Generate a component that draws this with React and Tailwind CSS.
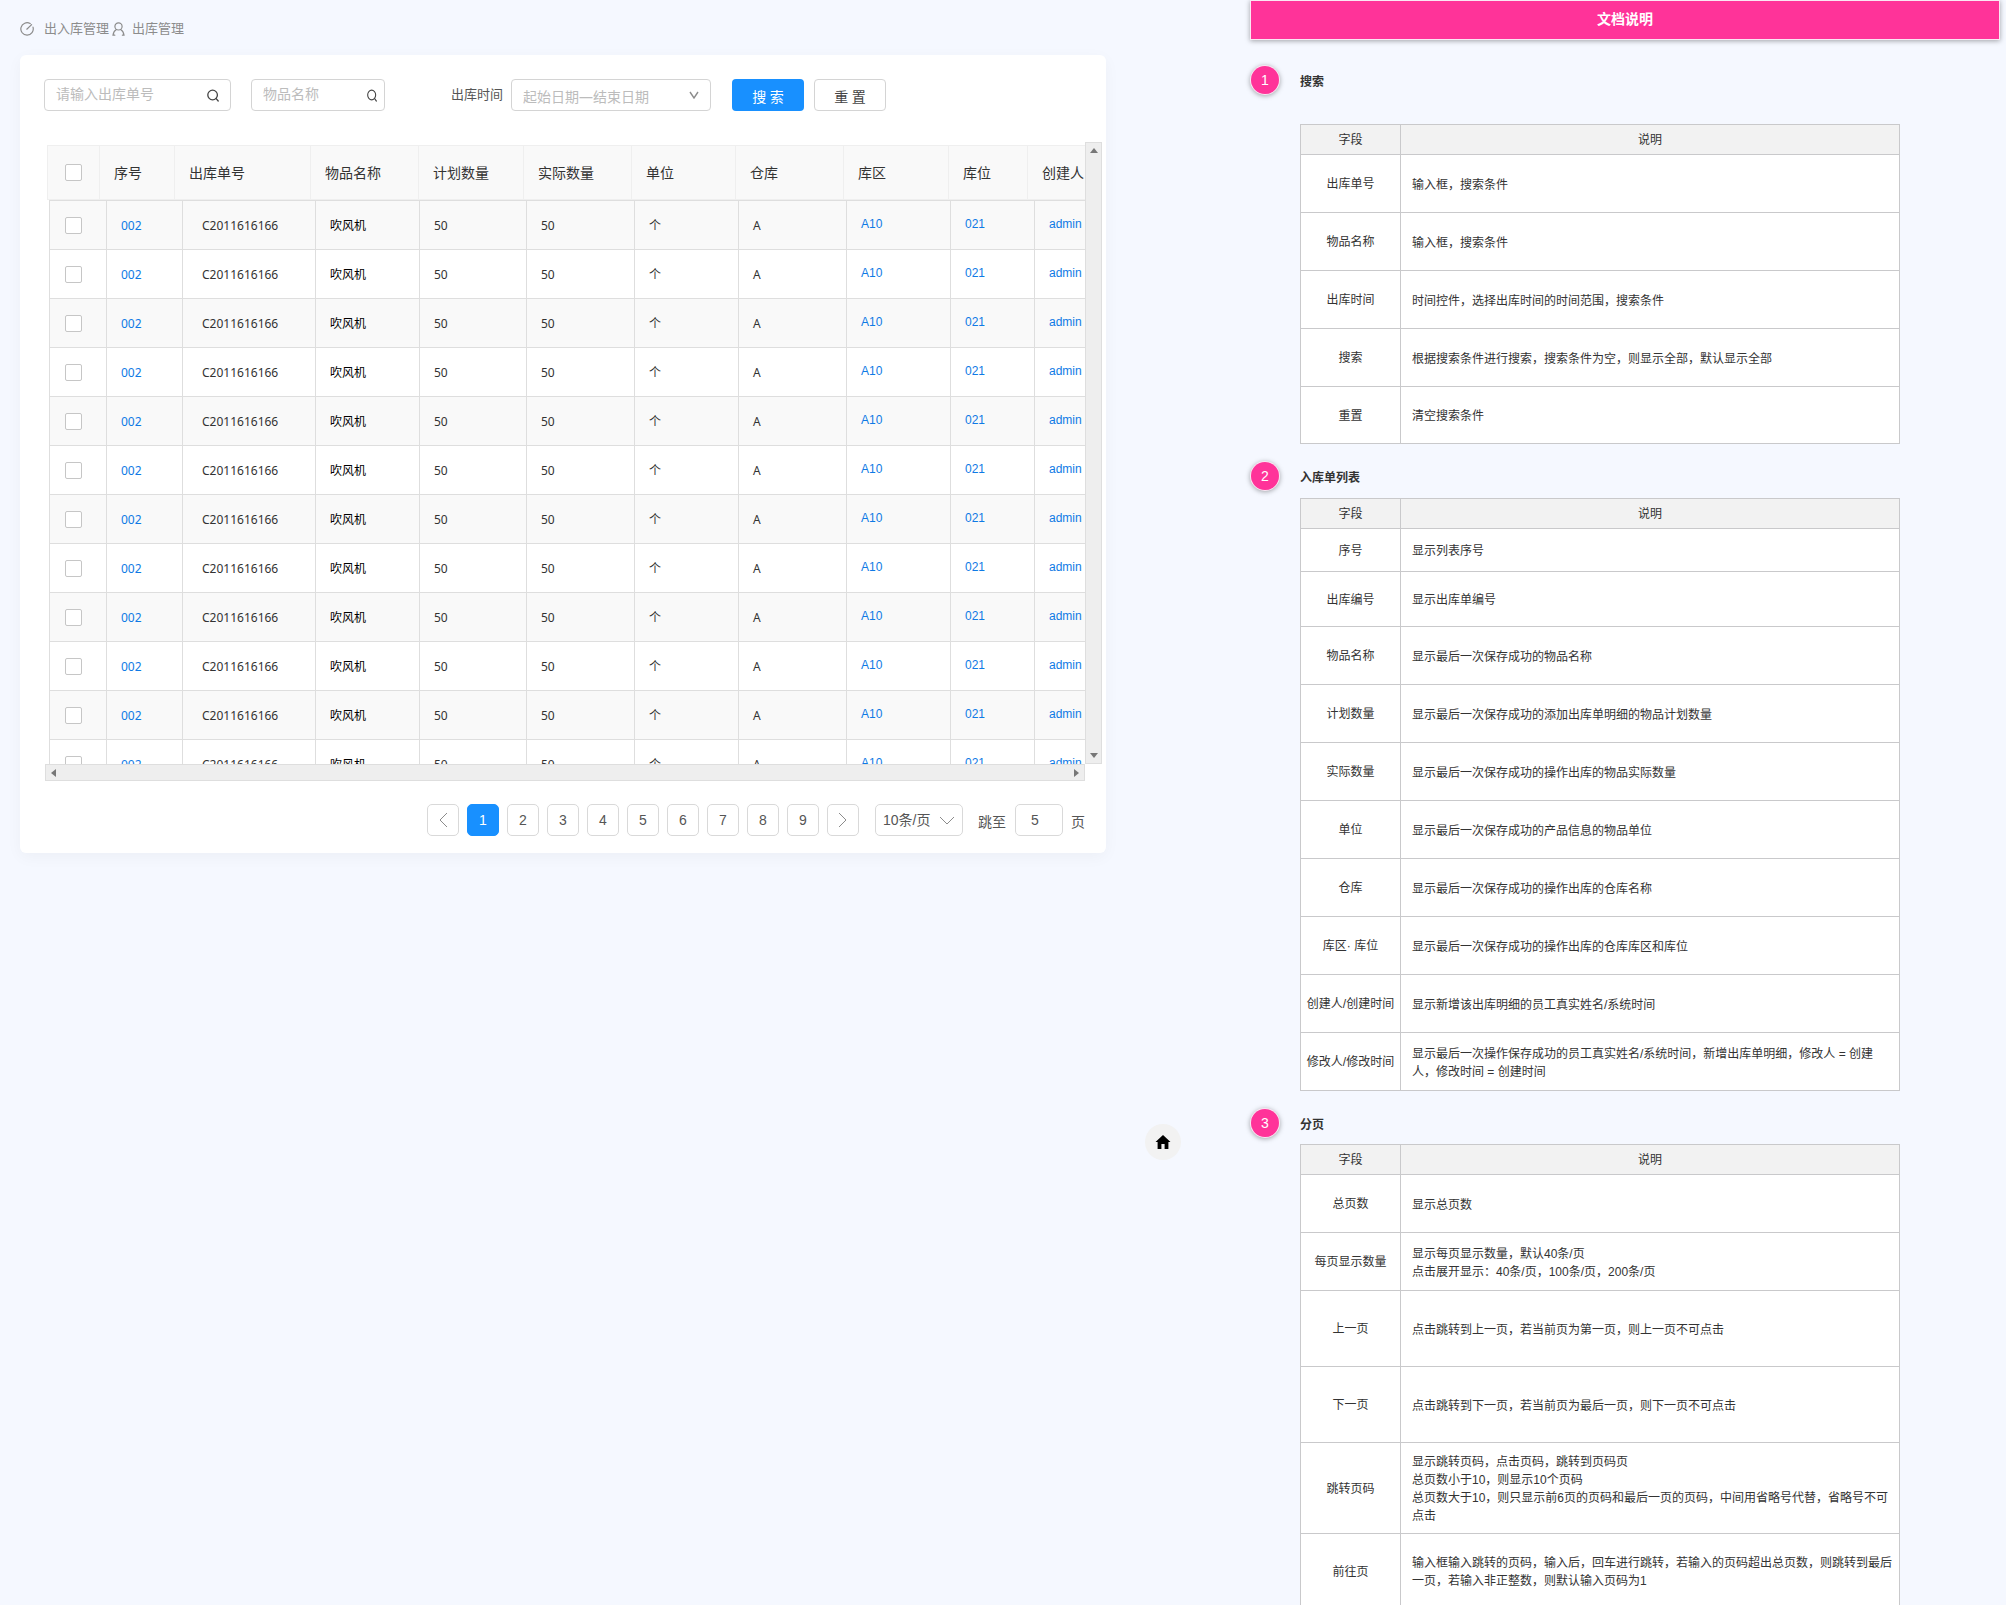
import React from "react";

const headColumns = [
  ["", "w-[52px]"],
  ["序号", "w-[75px]"],
  ["出库单号", "w-[136px]"],
  ["物品名称", "w-[108px]"],
  ["计划数量", "w-[105px]"],
  ["实际数量", "w-[108px]"],
  ["单位", "w-[104px]"],
  ["仓库", "w-[108px]"],
  ["库区", "w-[105px]"],
  ["库位", "w-[79px]"],
  ["创建人", "w-[120px]"],
];

const bodyWidths = [
  "w-[57px]",
  "w-[76px]",
  "w-[133px]",
  "w-[104px]",
  "w-[107px]",
  "w-[108px]",
  "w-[104px]",
  "w-[108px]",
  "w-[104px]",
  "w-[84px]",
  "w-[113px]",
];

const rows = Array.from({ length: 12 }, (_, i) => i);

const docs = [
  {
    title: "搜索",
    spacing: "pt-[27px]",
    gap: "h-[58px]",
    rows: [
      ["出库单号", ["输入框，搜索条件"], "h-[58px]"],
      ["物品名称", ["输入框，搜索条件"], "h-[58px]"],
      ["出库时间", ["时间控件，选择出库时间的时间范围，搜索条件"], "h-[58px]"],
      ["搜索", ["根据搜索条件进行搜索，搜索条件为空，则显示全部，默认显示全部"], "h-[58px]"],
      ["重置", ["清空搜索条件"], "h-[57px]"],
    ],
  },
  {
    title: "入库单列表",
    spacing: "pt-[18px]",
    gap: "h-[36px]",
    rows: [
      ["序号", ["显示列表序号"], "h-[43px]"],
      ["出库编号", ["显示出库单编号"], "h-[55px]"],
      ["物品名称", ["显示最后一次保存成功的物品名称"], "h-[58px]"],
      ["计划数量", ["显示最后一次保存成功的添加出库单明细的物品计划数量"], "h-[58px]"],
      ["实际数量", ["显示最后一次保存成功的操作出库的物品实际数量"], "h-[58px]"],
      ["单位", ["显示最后一次保存成功的产品信息的物品单位"], "h-[58px]"],
      ["仓库", ["显示最后一次保存成功的操作出库的仓库名称"], "h-[58px]"],
      ["库区· 库位", ["显示最后一次保存成功的操作出库的仓库库区和库位"], "h-[58px]"],
      ["创建人/创建时间", ["显示新增该出库明细的员工真实姓名/系统时间"], "h-[58px]"],
      [
        "修改人/修改时间",
        ["显示最后一次操作保存成功的员工真实姓名/系统时间，新增出库单明细，修改人 = 创建人，修改时间 = 创建时间"],
        "h-[58px]",
      ],
    ],
  },
  {
    title: "分页",
    spacing: "pt-[18px]",
    gap: "h-[35px]",
    rows: [
      ["总页数", ["显示总页数"], "h-[58px]"],
      ["每页显示数量", ["显示每页显示数量，默认40条/页", "点击展开显示：40条/页，100条/页，200条/页"], "h-[58px]"],
      ["上一页", ["点击跳转到上一页，若当前页为第一页，则上一页不可点击"], "h-[76px]"],
      ["下一页", ["点击跳转到下一页，若当前页为最后一页，则下一页不可点击"], "h-[76px]"],
      [
        "跳转页码",
        [
          "显示跳转页码，点击页码，跳转到页码页",
          "总页数小于10，则显示10个页码",
          "总页数大于10，则只显示前6页的页码和最后一页的页码，中间用省略号代替，省略号不可点击",
        ],
        "h-[91px]",
      ],
      [
        "前往页",
        ["输入框输入跳转的页码，输入后，回车进行跳转，若输入的页码超出总页数，则跳转到最后一页，若输入非正整数，则默认输入页码为1"],
        "h-[75px]",
      ],
    ],
  },
];

function GaugeIcon() {
  return (
    <svg width="14" height="14" viewBox="0 0 14 14" fill="none" stroke="#8c8c8c" strokeWidth="1.2" strokeLinecap="round">
      <path d="M10.2 1.6A6.2 6.2 0 1 0 13 5.2" />
      <path d="M6.8 7.2 11.6 2.6" />
    </svg>
  );
}

function UserIcon() {
  return (
    <svg width="13" height="14" viewBox="0 0 13 14" fill="none" stroke="#8c8c8c" strokeWidth="1.2" strokeLinecap="round">
      <circle cx="6.5" cy="4.4" r="3.6" />
      <path d="M4.4 7.6C2.6 8.6 1.4 10.6 1 13.2H2.8" />
      <path d="M8.6 7.6c1.8 1 3 3 3.4 5.6H10.4" />
    </svg>
  );
}

function SearchIcon({ width = 12 }) {
  return (
    <svg width={width} height="13" viewBox="0 0 12 13" preserveAspectRatio="none" fill="none" stroke="#444" strokeWidth="1.3" strokeLinecap="round">
      <circle cx="5.6" cy="6" r="4.8" />
      <path d="M9.2 9.6 11.2 12" />
    </svg>
  );
}

function Chevron({ points, width, height, color = "#8c8c8c", stroke = 1 }) {
  return (
    <svg width={width} height={height} viewBox={`0 0 ${width} ${height}`} fill="none" stroke={color} strokeWidth={stroke}>
      <polyline points={points} />
    </svg>
  );
}

function Arrow({ points }) {
  return (
    <svg width="10" height="10" viewBox="0 0 10 10" fill="#777">
      <polygon points={points} />
    </svg>
  );
}

function SearchBox({ label, width, iconPad, iconWidth }) {
  return (
    <div className={`flex h-8 items-center rounded border border-[#d4d4d4] bg-white pl-[11px] ${width}`}>
      <input
        type="text"
        aria-label={label}
        placeholder={label}
        className="h-6 min-w-0 flex-1 bg-transparent pb-1 text-sm text-[#333] outline-none placeholder:text-[#bcbcbc]"
      />
      <button type="button" aria-label="查询" className={iconPad}>
        <SearchIcon width={iconWidth} />
      </button>
    </div>
  );
}

function Tick({ label }) {
  return (
    <input
      type="checkbox"
      aria-label={label}
      className="block h-[17px] w-[17px] appearance-none rounded-[2px] border border-[#c6c6c6] bg-white"
    />
  );
}

function Filters() {
  return (
    <form className="flex items-center pl-6">
      <SearchBox label="请输入出库单号" width="w-[187px]" iconPad="px-[11px]" iconWidth={12} />
      <div className="ml-5">
        <SearchBox label="物品名称" width="w-[134px]" iconPad="px-[7px]" iconWidth={10} />
      </div>
      <label htmlFor="period" className="ml-[66px] text-[13px] text-[#555]">
        出库时间
      </label>
      <div className="relative ml-2 w-[200px]">
        <select
          id="period"
          className="h-8 w-full appearance-none rounded border border-[#d4d4d4] bg-white pt-1 pl-[11px] text-sm text-[#bcbcbc]"
        >
          <option>起始日期—结束日期</option>
        </select>
        <span className="pointer-events-none absolute top-3 right-3">
          <Chevron points="1,1 5,7 9,1" width={10} height={8} stroke={1.4} />
        </span>
      </div>
      <button type="submit" className="ml-[21px] h-8 w-[72px] rounded bg-[#1890ff] pt-1 text-sm text-white">
        搜 索
      </button>
      <button type="reset" className="ml-[10px] h-8 w-[72px] rounded border border-[#d4d4d4] bg-white pt-1 text-sm text-[#444]">
        重 置
      </button>
    </form>
  );
}

function Listing() {
  const link = "pb-0.5 pl-[14px] font-['Liberation_Sans'] text-[#0f7ae5]";
  return (
    <div className="mt-[31px] pr-1 pl-[25px]">
      <div className="flex h-[622px]">
        <div className="min-w-0 flex-1 overflow-hidden pt-[3px]">
          <table className="ml-[2px] w-[1100px] table-fixed border-collapse">
            <thead>
              <tr className="h-[54px] bg-[#f9f9f9]">
                {headColumns.map(([name, width], i) => (
                  <th
                    key={i}
                    className={`border border-[#efefef] p-0 text-left text-sm font-normal text-[#333] ${width} ${i ? "pl-[14px]" : "pl-[17px]"}`}
                  >
                    {i ? name : <Tick label="全选" />}
                  </th>
                ))}
              </tr>
            </thead>
          </table>
          <table className="ml-1 w-[1098px] table-fixed border-collapse">
            <colgroup>
              {bodyWidths.map((width, i) => (
                <col key={i} className={width} />
              ))}
            </colgroup>
            <tbody className="text-xs text-[#333] [&_td]:border [&_td]:border-[#dedede] [&_td]:pr-0">
              {rows.map((i) => (
                <tr key={i} className="h-[49px] odd:bg-[#f9f9f9]">
                  <td className="py-0 pl-[15px]">
                    <Tick label="选择" />
                  </td>
                  <td className="pt-0.5 pl-[14px] text-[#0f7ae5]">
                    <a href="#detail">002</a>
                  </td>
                  <td className="pt-0.5 pl-[19px]">C2011616166</td>
                  <td className="pt-0.5 pl-[14px] text-black">吹风机</td>
                  <td className="pt-0.5 pl-[14px]">50</td>
                  <td className="pt-0.5 pl-[14px]">50</td>
                  <td className="pt-0.5 pl-[14px]">个</td>
                  <td className="pt-0.5 pl-[14px]">A</td>
                  <td className={link}>
                    <a href="#area">A10</a>
                  </td>
                  <td className={link}>
                    <a href="#place">021</a>
                  </td>
                  <td className={link}>
                    <a href="#user">admin</a>
                  </td>
                </tr>
              ))}
            </tbody>
          </table>
        </div>
        <div className="flex w-[17px] flex-col items-center justify-between border border-[#dedede] bg-[#eee] py-[2px]">
          <Arrow points="1,8 5,3 9,8" />
          <Arrow points="1,2 5,7 9,2" />
        </div>
      </div>
      <div className="mr-[17px] flex h-[17px] items-center justify-between border border-[#dedede] bg-[#eee] px-[3px]">
        <Arrow points="7,1 2,5 7,9" />
        <Arrow points="3,1 8,5 3,9" />
      </div>
    </div>
  );
}

function Pagination() {
  const box = "flex h-8 w-8 items-center justify-center rounded-[5px] border";
  return (
    <nav aria-label="分页" className="mt-[23px] flex items-center justify-end pr-[21px] font-['Liberation_Sans','Noto_Sans_CJK_SC',sans-serif] text-sm text-[#555]">
      <div className="flex gap-2">
        <button type="button" aria-label="上一页" className={`${box} border-[#d9d9d9]`}>
          <Chevron points="9,1 2,8 9,15" width={10} height={16} />
        </button>
        {[1, 2, 3, 4, 5, 6, 7, 8, 9].map((n) => (
          <button
            key={n}
            type="button"
            className={`${box} ${n === 1 ? "border-[#1890ff] bg-[#1890ff] text-white" : "border-[#d9d9d9]"}`}
          >
            {n}
          </button>
        ))}
        <button type="button" aria-label="下一页" className={`${box} border-[#d9d9d9]`}>
          <Chevron points="1,1 8,8 1,15" width={10} height={16} />
        </button>
      </div>
      <div className="relative ml-4 w-[88px]">
        <select aria-label="每页条数" className="h-8 w-full appearance-none rounded-[5px] border border-[#d9d9d9] bg-white pl-[7px]">
          <option>10条/页</option>
        </select>
        <span className="pointer-events-none absolute top-3 right-2">
          <Chevron points="1,1 8,8 15,1" width={16} height={10} />
        </span>
      </div>
      <label htmlFor="jump" className="ml-[15px] pt-1">
        跳至
      </label>
      <input
        id="jump"
        type="text"
        defaultValue="5"
        className="ml-[9px] h-8 w-12 rounded-[5px] border border-[#d9d9d9] bg-white pl-[15px]"
      />
      <span className="ml-2 pt-1">页</span>
    </nav>
  );
}

function DocSection({ doc, index }) {
  return (
    <section className={doc.spacing}>
      <div className={`flex items-start gap-[21px] ${doc.gap}`}>
        <span className="flex h-7 w-7 items-center justify-center rounded-full bg-[#ff3399] font-['Liberation_Sans'] text-sm text-white shadow-[0_0_0_1px_#fbe6f3,0_1px_5px_1px_rgba(0,0,0,0.35)]">
          {index + 1}
        </span>
        <h2 className="pt-2 text-xs font-bold text-[#333]">{doc.title}</h2>
      </div>
      <table className="ml-[49px] w-[600px] table-fixed border-collapse bg-white text-xs leading-[18px] text-[#333] [&_td]:border [&_td]:border-[#c9c9cb] [&_th]:border [&_th]:border-[#c9c9cb]">
        <thead>
          <tr className="h-[30px] bg-[#f2f2f2]">
            <th className="w-[100px] p-0 font-normal">字段</th>
            <th className="p-0 font-normal">说明</th>
          </tr>
        </thead>
        <tbody>
          {doc.rows.map(([name, lines, height]) => (
            <tr key={name} className={height}>
              <td className="px-0 pt-px text-center whitespace-nowrap">{name}</td>
              <td className="pt-0.5 pr-[5px] pb-0 pl-[11px]">
                {lines.map((line) => (
                  <p key={line}>{line}</p>
                ))}
              </td>
            </tr>
          ))}
        </tbody>
      </table>
    </section>
  );
}

export default function App() {
  return (
    <div className="flex h-screen items-start overflow-hidden bg-[#f5f8ff] font-['Noto_Sans','Noto_Sans_CJK_SC',sans-serif]">
      <main className="min-w-0 flex-1 pl-5">
        <nav aria-label="位置" className="flex h-[55px] items-center pt-0.5 text-[13px] text-[#8c8c8c]">
          <GaugeIcon />
          <span className="mr-[3px] ml-[10px]">出入库管理</span>
          <UserIcon />
          <span className="ml-[7px]">出库管理</span>
        </nav>
        <div className="rounded-md bg-white pt-6 pb-[17px] shadow-[0_4px_16px_rgba(0,0,0,0.04)]">
          <Filters />
          <Listing />
          <Pagination />
        </div>
      </main>
      <button
        type="button"
        aria-label="首页"
        className="mt-[1124px] mr-[70px] ml-[39px] flex h-9 w-9 shrink-0 items-center justify-center rounded-full bg-[#f2f2f2]"
      >
        <svg width="16" height="16" viewBox="0 0 16 16" fill="#000">
          <path d="M8 1 0.5 8H2.6V15H6.4V10H9.6V15H13.4V8H15.5Z" />
        </svg>
      </button>
      <aside className="w-[755px] shrink-0 pr-[7px] font-['Liberation_Sans','Noto_Sans_CJK_SC',sans-serif]">
        <h1 className="mt-px flex h-[38px] items-center justify-center bg-[#ff3399] pb-0.5 text-sm font-bold text-white shadow-[0_0_0_1px_#fbe6f3,0_1px_5px_1px_rgba(0,0,0,0.35)]">
          文档说明
        </h1>
        {docs.map((doc, i) => (
          <DocSection key={doc.title} doc={doc} index={i} />
        ))}
      </aside>
    </div>
  );
}
